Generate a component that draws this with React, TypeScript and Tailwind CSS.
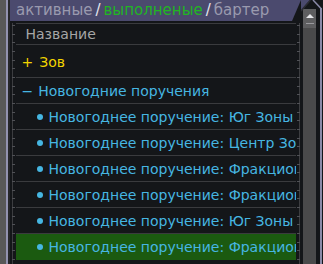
const FONT = { fontFamily: '"DejaVu Sans", Verdana, sans-serif' };

function Ruler({ side }: { side: "left" | "right" }) {
  const h = 243; // y 21..264
  const ticks: number[] = [];
  for (let k = -30; k < 40; k++) {
    const y = 77 + (k * 26) / 3 - 21;
    if (y >= 3 && y <= h) ticks.push(Math.round(y) + 0.5);
  }
  const lx = side === "left" ? 2.5 : 3.5;
  return (
    <svg width="6" height={h} className="block">
      <line x1={lx} y1={2} x2={lx} y2={h} stroke="#3c3d40" strokeWidth="1" />
      {ticks.map((y, i) =>
        side === "left" ? (
          <line key={i} x1={2} y1={y} x2={5} y2={y} stroke="#505156" strokeWidth="1" />
        ) : (
          <line key={i} x1={1} y1={y} x2={4} y2={y} stroke="#505156" strokeWidth="1" />
        )
      )}
    </svg>
  );
}

function Item({ text, selected }: { text: string; selected?: boolean }) {
  return (
    <div
      className={
        "h-[26px] flex items-center overflow-hidden whitespace-nowrap pl-[21px] " +
        (selected ? "bg-[#1b5a10]" : "border-b border-[#3a3b3e]")
      }
    >
      <span className="w-[6px] h-[6px] rounded-full bg-[#46b6e2] mr-[6px] flex-none" />
      <span className="text-[14px] text-[#46b6e2] leading-none">Новогоднее поручение: {text}</span>
    </div>
  );
}

export default function App() {
  return (
    <div
      className="relative w-[323px] h-[264px] overflow-hidden bg-[#141619] flex"
      style={FONT}
    >
      {/* left frame */}
      <div className="w-[6px] bg-[#585858] flex-none" />
      <div className="w-[2px] bg-[#9292b0] flex-none" />
      <div className="w-[2px] bg-[#26272a] flex-none" />

      {/* main */}
      <div className="w-[291px] flex-none flex flex-col">
        <div className="h-[21px] bg-[#4b4a6e] [clip-path:polygon(0_0,100%_0,calc(100%-9px)_100%,0_100%)] flex items-center pl-[6px] text-[15px] leading-none whitespace-nowrap">
          <span className="text-[#9a9aae]">активные</span>
          <span className="text-[#e6e6ee] mx-[3px]">/</span>
          <span className="text-[#22b424]">выполненые</span>
          <span className="text-[#e6e6ee] mx-[3px]">/</span>
          <span className="text-[#9a9aae]">бартер</span>
        </div>
        <div className="flex flex-1">
          <Ruler side="left" />
          <div className="w-[280px] flex-none flex flex-col pt-[2px]">
            <div className="h-[22px] border-y border-[#3a3b3e] flex items-center pl-[10px] text-[14px] text-[#a6a6a6] leading-none">
              Название
            </div>
            <div className="h-[33px] border-b border-[#3a3b3e] pt-[4px] pl-[6px] text-[14px] text-[#f2d400] leading-[26px] whitespace-nowrap">
              <span className="mr-[6px]">+</span>Зов
            </div>
            <div className="h-[26px] border-b border-[#3a3b3e] flex items-center pl-[6px] text-[14px] text-[#46b6e2] leading-none whitespace-nowrap">
              <span className="mr-[5px]">−</span>Новогодние поручения
            </div>
            <Item text="Юг Зоны" />
            <Item text="Центр Зоны" />
            <Item text="Фракционное" />
            <Item text="Фракционное" />
            <Item text="Юг Зоны" />
            <Item text="Фракционное" selected />
          </div>
          <Ruler side="right" />
        </div>
      </div>

      {/* scrollbar area */}
      <div className="w-[2px] flex-none" />
      <div className="w-[13px] flex-none pt-[9px] flex flex-col">
        <div className="flex-1 bg-[#4a4a4b] flex flex-col">
          <div className="h-[19px] bg-[#5e5e60] flex flex-col items-center pt-[5px]">
            <svg width="8" height="4" className="block">
              <polygon points="4,0 8,4 0,4" fill="#e8e8ec" />
            </svg>
            <div className="w-[8px] h-[1px] bg-[#9a9a9e] mt-[5px]" />
          </div>
        </div>
      </div>
      <div className="w-[4px] flex-none" />
      <div className="w-[2px] flex-none pt-[8px]">
        <div className="h-full bg-[#8a8aa8]" />
      </div>
      <div className="w-[1px] flex-none" />

      {/* top-right corner decoration */}
      <svg className="absolute left-[301px] top-0" width="22" height="12">
        <polygon points="0,0 9,0 0,10.5" fill="#4b4a6e" />
        <line x1="9.5" y1="0" x2="0" y2="11" stroke="#2c2c34" strokeWidth="1.5" />
        <line x1="12" y1="0" x2="20" y2="8.5" stroke="#8a8aa8" strokeWidth="1.5" />
      </svg>
    </div>
  );
}
